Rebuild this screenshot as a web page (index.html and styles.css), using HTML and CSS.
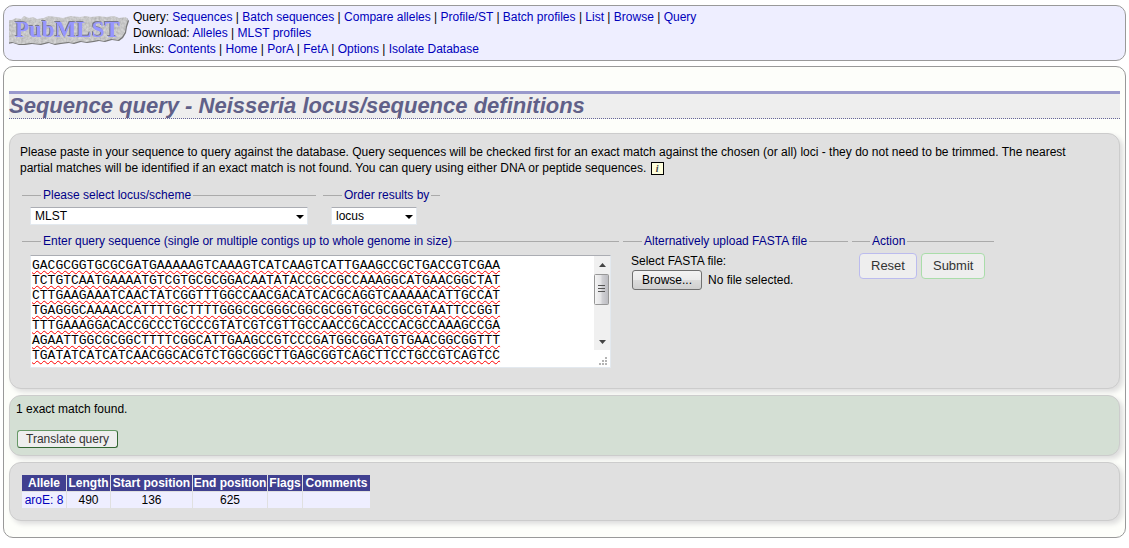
FILE: index.html
```html
<!DOCTYPE html>
<html lang="en">
<head>
<meta charset="utf-8">
<title>Sequence query - Neisseria locus/sequence definitions</title>
<link rel="stylesheet" href="styles.css">
</head>
<body>
<header class="banner">
  <svg class="logo" width="120" height="34" viewBox="0 0 120 34" role="img" aria-label="PubMLST">
    <defs>
      <filter id="stone" x="-5%" y="-10%" width="110%" height="125%" color-interpolation-filters="sRGB">
        <feTurbulence type="fractalNoise" baseFrequency="0.4" numOctaves="2" seed="4" result="n"/>
        <feColorMatrix in="n" type="matrix" values="0.22 0 0 0 0.67  0.22 0 0 0 0.67  0.22 0 0 0 0.67  0 0 0 0 1" result="g"/>
        <feComposite in="g" in2="SourceAlpha" operator="in"/>
      </filter>
    </defs>
    <path fill="#777" transform="translate(1 2)" d="M3 5l4-2 5 1 3-3 5 2 4-1 4 2 7-1 4-2 9 1 6 1 7-2 10 1 6-1 5 1 8-1 7 1 8-1 5 2 7-1 2 3-2 6-1 6-3 5-4 3-7-1-7 2-6-1-5 1-7 1-6-1-7 2-5-1-8 1-6 1-6-2-8 2-9-1-7 1-6 0-6-2-6 1-3-3 1-5-3-6 2-4-1-4z"/>
    <path filter="url(#stone)" transform="translate(0 1)" d="M3 5l4-2 5 1 3-3 5 2 4-1 4 2 7-1 4-2 9 1 6 1 7-2 10 1 6-1 5 1 8-1 7 1 8-1 5 2 7-1 2 3-2 6-1 6-3 5-4 3-7-1-7 2-6-1-5 1-7 1-6-1-7 2-5-1-8 1-6 1-6-2-8 2-9-1-7 1-6 0-6-2-6 1-3-3 1-5-3-6 2-4-1-4z"/>
    <text class="logo-text" x="6" y="23">PubMLST</text>
  </svg>
  <nav class="menu">
    <div>Query: <a href="#">Sequences</a> | <a href="#">Batch sequences</a> | <a href="#">Compare alleles</a> | <a href="#">Profile/ST</a> | <a href="#">Batch profiles</a> | <a href="#">List</a> | <a href="#">Browse</a> | <a href="#">Query</a></div>
    <div>Download: <a href="#">Alleles</a> | <a href="#">MLST profiles</a></div>
    <div>Links: <a href="#">Contents</a> | <a href="#">Home</a> | <a href="#">PorA</a> | <a href="#">FetA</a> | <a href="#">Options</a> | <a href="#">Isolate Database</a></div>
  </nav>
</header>

<main class="page">
  <h1>Sequence query - Neisseria locus/sequence definitions</h1>

  <form class="box query">
    <p>Please paste in your sequence to query against the database. Query sequences will be checked first for an exact match against the chosen (or all) loci - they do not need to be trimmed. The nearest partial matches will be identified if an exact match is not found. You can query using either DNA or peptide sequences. <a class="info" href="#">i</a></p>
    <div class="row">
      <fieldset class="scheme">
        <legend><label for="locus">Please select locus/scheme</label></legend>
        <div class="pick"><select id="locus"><option>MLST</option></select></div>
      </fieldset>
      <fieldset class="order">
        <legend><label for="order">Order results by</label></legend>
        <div class="pick"><select id="order"><option>locus</option></select></div>
      </fieldset>
    </div>
    <div class="row entry">
      <fieldset class="sequence">
        <legend><label for="seq">Enter query sequence (single or multiple contigs up to whole genome in size)</label></legend>
        <div class="editor">
          <textarea id="seq" spellcheck="false">GACGCGGTGCGCGATGAAAAAGTCAAAGTCATCAAGTCATTGAAGCCGCTGACCGTCGAA
TCTGTCAATGAAAATGTCGTGCGCGGACAATATACCGCCGCCAAAGGCATGAACGGCTAT
CTTGAAGAAATCAACTATCGGTTTGGCCAACGACATCACGCAGGTCAAAAACATTGCCAT
TGAGGGCAAAACCATTTTGCTTTTGGGCGCGGGCGGCGCGGTGCGCGGCGTAATTCCGGT
TTTGAAAGGACACCGCCCTGCCCGTATCGTCGTTGCCAACCGCACCCACGCCAAAGCCGA
AGAATTGGCGCGGCTTTTCGGCATTGAAGCCGTCCCGATGGCGGATGTGAACGGCGGTTT
TGATATCATCATCAACGGCACGTCTGGCGGCTTGAGCGGTCAGCTTCCTGCCGTCAGTCC</textarea>
          <svg class="scroll" width="16" height="111" viewBox="0 0 16 111" aria-hidden="true">
            <defs><linearGradient id="thumb"><stop offset="0" stop-color="#f5f5f5"/><stop offset=".45" stop-color="#e4e4e6"/><stop offset=".55" stop-color="#d0d0d4"/><stop offset="1" stop-color="#bbbbc0"/></linearGradient></defs>
            <path fill="#f0f0f0" d="M0 0h16v94H0z"/>
            <path fill="#444" d="M5 11h7L8.500 7zM5 84h7l-3.500 4z"/>
            <rect x=".5" y="18.500" width="14" height="30" rx="1" fill="url(#thumb)" stroke="#979797"/>
            <path stroke="#555" d="M4 29.500h7M4 32.500h7M4 35.500h7"/>
            <path fill="#b4b4b4" d="M11 101h2v2h-2zM8 104h2v2H8zM11 104h2v2h-2zM5 107h2v2H5zM8 107h2v2H8zM11 107h2v2h-2z"/>
          </svg>
        </div>
      </fieldset>
      <fieldset class="upload">
        <legend>Alternatively upload FASTA file</legend>
        <label for="fasta">Select FASTA file:</label>
        <div class="file">
          <input id="fasta" type="file">
          <label class="browse" for="fasta">Browse...</label>
          <span>No file selected.</span>
        </div>
      </fieldset>
      <fieldset class="action">
        <legend>Action</legend>
        <div class="buttons">
          <button class="reset" type="reset">Reset</button>
          <button class="submit" type="button">Submit</button>
        </div>
      </fieldset>
    </div>
  </form>

  <section class="box found">
    <p>1 exact match found.</p>
    <button class="translate" type="button">Translate query</button>
  </section>

  <section class="box results">
    <table>
      <thead><tr><th class="c-allele">Allele</th><th class="c-length">Length</th><th class="c-start">Start position</th><th class="c-end">End position</th><th class="c-flags">Flags</th><th class="c-comments">Comments</th></tr></thead>
      <tbody><tr><td><a href="#">aroE: 8</a></td><td>490</td><td>136</td><td>625</td><td></td><td></td></tr></tbody>
    </table>
  </section>
</main>
</body>
</html>
```

FILE: styles.css
```css
* { box-sizing: border-box; }

body {
  margin: 5px 3px;
  background: #fff;
  color: #000;
  font: 12px/16px "Liberation Sans", Arial, sans-serif;
}

a { color: #00b; text-decoration: none; }
p { margin: 0; }

.banner {
  display: flex;
  gap: 4px;
  padding: 3px 5px;
  border: 1px solid #999;
  border-radius: 10px;
  background: #eef;
}
.logo { flex: none; margin-top: 5px; }
.logo-text {
  font: bold 23px "Liberation Serif", "Times New Roman", serif;
  fill: #9696ff;
  filter: drop-shadow(-1px -1px 0 #77778c);
}

.page {
  margin-top: 5px;
  padding: 24px 5px 16px;
  border: 1px solid #999;
  border-radius: 10px;
  background: #fdfefa;
}

h1 {
  margin: 0 0 14px;
  border-top: 3px solid #99c;
  border-bottom: 1px dotted #669;
  background: #eee;
  color: #606088;
  font: italic bold 22px/24px "Liberation Sans", Arial, sans-serif;
}

.box {
  border: 1px solid #ccc;
  border-radius: 12px;
  box-shadow: 3px 3px 5px #ddd;
  background: #e0e0e0;
}
.box + .box { margin-top: 6px; }

.query { padding: 10px 10px 20px; }
.query p { padding-right: 18px; }
.info {
  display: inline-block;
  width: 13px;
  margin-left: 1px;
  border: 1px solid #000;
  background: #ffd;
  color: #444;
  font: italic bold 10px/11px "Liberation Serif", serif;
  text-align: center;
}

.row { display: flex; gap: 7px; margin: 11px 2px 0; }
.entry { gap: 4px; margin-top: 8px; }

fieldset {
  min-width: 0;
  margin: 0;
  padding: 4px 8px 0;
  border: 0;
  border-top: 1px solid #aaa;
}
legend { margin-left: 11px; padding: 0 2px; color: #008; white-space: nowrap; }

.scheme { flex: 0 1 294px; }
.order { flex: 0 1 117px; }
.sequence { flex: 0 1 597px; }
.upload { flex: 0 1 225px; }
.action { flex: 0 1 142px; padding: 4px 7px 0; }

.pick { position: relative; }
.order .pick { margin-right: 15px; }
.pick::after {
  content: "";
  position: absolute;
  right: 4px;
  top: 8px;
  border: 4px solid transparent;
  border-top-color: #000;
  border-bottom: 0;
  pointer-events: none;
}
select {
  display: block;
  width: 100%;
  height: 18px;
  padding: 0 4px;
  appearance: none;
  border: 1px solid #e3e9ef;
  border-top-color: #abadb3;
  border-radius: 1px;
  background: #fff;
  color: #000;
  font: 12px/16px "Liberation Sans", Arial, sans-serif;
}

.editor {
  display: flex;
  margin-top: 2px;
  border: 1px solid #e3e9ef;
  border-top-color: #abadb3;
  background: #fff;
}
textarea {
  flex: 1;
  min-width: 0;
  height: 111px;
  padding: 2px 1px;
  border: 0;
  overflow: hidden;
  resize: none;
  background: #fff;
  color: #000;
  font: 13px/15px "Liberation Mono", "Courier New", monospace;
  text-decoration: underline wavy #f00 1px;
  text-decoration-skip-ink: none;
}
.scroll { flex: none; }

.file { position: relative; display: flex; align-items: center; gap: 6px; margin-top: 1px; padding-left: 1px; }
.file input { position: absolute; width: 1px; height: 1px; opacity: 0; }
.browse {
  padding: 1px 9px;
  border: 1px solid #707070;
  border-radius: 3px;
  background: linear-gradient(#f3f3f3, #ebebeb 50%, #ddd 50%, #cfcfcf);
}

button { background: #eee; color: #333; font: 12px/16px "Liberation Sans", Arial, sans-serif; }
.buttons { display: flex; gap: 4px; }
.reset, .submit { padding: 4px 11px; border: 1px solid #bbe; border-radius: 4px; font-size: 13px; }
.submit { border-color: #ada; }

.found { padding: 5px 7px 7px 6px; background: #d4dfd4; }
.translate {
  margin: 13px 0 0 1px;
  padding: 0 8px;
  border: 1px solid #696;
  border-right-color: #363;
  border-bottom-color: #363;
  border-radius: 3px;
}

.results { padding: 11px; }
table { border-spacing: 1px; }
th, td { height: 16px; padding: 0; text-align: center; }
th { background: #404090; color: #fff; }
td { background: #eef; }
.c-allele { width: 44px; }
.c-length { width: 43px; }
.c-start { width: 81px; }
.c-end { width: 74px; }
.c-flags { width: 34px; }
.c-comments { width: 67px; }
```
